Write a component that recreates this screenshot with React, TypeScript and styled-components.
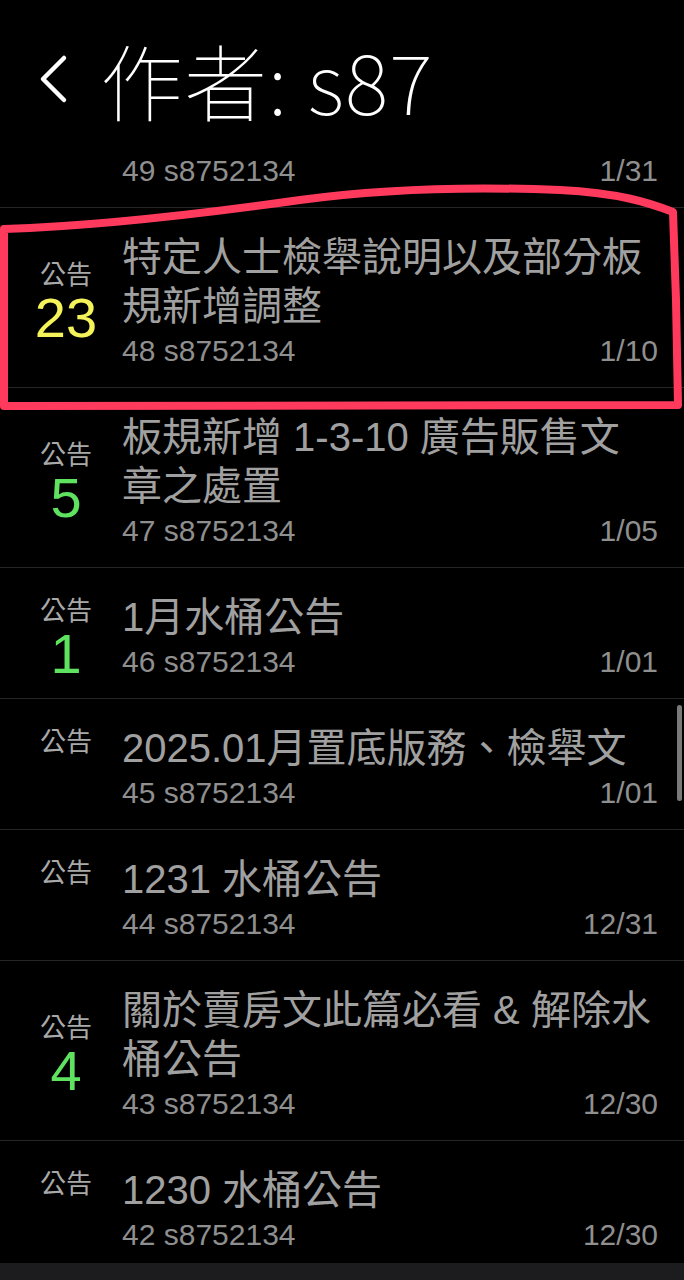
import React from "react";
import styled, { createGlobalStyle } from "styled-components";

const Global = createGlobalStyle`
  html, body { margin: 0; padding: 0; background: #000; }
  body { font-family: "Liberation Sans", "Noto Sans CJK TC", sans-serif; }
  * { box-sizing: border-box; }
`;

const Page = styled.div`
  position: relative;
  width: 684px;
  height: 1280px;
  background: #000;
  display: flex;
  flex-direction: column;
  overflow: hidden;
`;

const Header = styled.header`
  height: 150px;
  flex: none;
  display: flex;
  align-items: center;
  padding: 8px 0 0 38px;
  gap: 30px;
  background: #000;
`;

const BackButton = styled.button`
  background: none;
  border: none;
  padding: 0;
  width: 32px;
  height: 50px;
  display: flex;
  align-items: center;
  justify-content: center;
`;

const Title = styled.h1`
  margin: 0;
  color: #fff;
  font-family: "Noto Sans CJK TC", sans-serif;
  font-weight: 100;
  font-size: 83px;
  line-height: 1;
  letter-spacing: 1px;
`;

const Viewport = styled.div`
  flex: 1;
  overflow: hidden;
`;

const Row = styled.div<{ $clipped?: boolean }>`
  display: flex;
  border-bottom: 1px solid #262626;
  padding: ${(p) => (p.$clipped ? "1px" : "25px")} 26px 16px 0;
`;

const Left = styled.div`
  flex: none;
  width: 112px;
  margin: 0 0 6px 10px;
  display: flex;
  flex-direction: column;
  align-items: center;
  justify-content: center;
`;

const Label = styled.div`
  font-family: "Noto Sans CJK TC", sans-serif;
  font-size: 26px;
  line-height: 30px;
  color: #a9a9a9;
`;

const Num = styled.div<{ $color: string }>`
  height: 52px;
  font-family: "Liberation Sans", sans-serif;
  font-size: 56px;
  line-height: 60px;
  color: ${(p) => p.$color};
`;

const Body = styled.div<{ $clipped?: boolean }>`
  flex: 1;
  min-width: 0;
  display: flex;
  flex-direction: column;
  margin-left: ${(p) => (p.$clipped ? "122px" : "0")};
`;

const PostTitle = styled.div`
  font-family: "Liberation Sans", "Noto Sans CJK TC", sans-serif;
  font-size: 40px;
  line-height: 49px;
  color: #a0a0a0;
`;

const Meta = styled.div`
  display: flex;
  justify-content: space-between;
  font-family: "Liberation Sans", sans-serif;
  font-size: 30px;
  line-height: 40px;
  color: #8f8f8f;
  white-space: pre;
`;

const Footer = styled.div`
  height: 17px;
  flex: none;
  background: #1c1c1e;
`;

const ScrollThumb = styled.div`
  position: absolute;
  right: 2px;
  top: 705px;
  width: 5px;
  height: 96px;
  border-radius: 3px;
  background: #7a7a7a;
`;

const Annotation = styled.svg`
  position: absolute;
  left: 0;
  top: 0;
  pointer-events: none;
`;

type Post = {
  num?: string;
  color?: string;
  title: string;
  id: string;
  date: string;
};

const YELLOW = "#f4f35a";
const GREEN = "#5fe25f";

const posts: Post[] = [
  { num: "23", color: YELLOW, title: "特定人士檢舉說明以及部分板規新增調整", id: "48", date: "1/10" },
  { num: "5", color: GREEN, title: "板規新增 1-3-10 廣告販售文章之處置", id: "47", date: "1/05" },
  { num: "1", color: GREEN, title: "1月水桶公告", id: "46", date: "1/01" },
  { title: "2025.01月置底版務、檢舉文", id: "45", date: "1/01" },
  { title: "1231 水桶公告", id: "44", date: "12/31" },
  { num: "4", color: GREEN, title: "關於賣房文此篇必看 & 解除水桶公告", id: "43", date: "12/30" },
  { title: "1230 水桶公告", id: "42", date: "12/30" },
];

export default function App() {
  return (
    <Page>
      <Global />
      <Header>
        <BackButton aria-label="返回">
          <svg width="32" height="50" viewBox="0 0 32 50">
            <polyline
              points="26,4 5,25 26,46"
              fill="none"
              stroke="#fff"
              strokeWidth="4.5"
              strokeLinecap="round"
              strokeLinejoin="round"
            />
          </svg>
        </BackButton>
        <Title>作者: s87</Title>
      </Header>
      <Viewport>
        <Row $clipped>
          <Body $clipped>
            <Meta>
              <span>49 s8752134</span>
              <span>1/31</span>
            </Meta>
          </Body>
        </Row>
        {posts.map((p) => (
          <Row key={p.id}>
            <Left>
              <Label>公告</Label>
              <Num $color={p.color ?? "transparent"}>{p.num ?? ""}</Num>
            </Left>
            <Body>
              <PostTitle>{p.title}</PostTitle>
              <Meta>
                <span>{p.id} s8752134</span>
                <span>{p.date}</span>
              </Meta>
            </Body>
          </Row>
        ))}
      </Viewport>
      <Footer />
      <ScrollThumb />
      <Annotation width="684" height="1280" viewBox="0 0 684 1280">
        <path
          d="M4,406 L4,229 C 100,226 200,214 300,200 C 380,189 460,186 560,190 C 620,193 650,203 673,212 L 676,300 L 678,405 Z"
          fill="none"
          stroke="#ff3a5c"
          strokeWidth="8"
          strokeLinejoin="round"
          strokeLinecap="round"
        />
      </Annotation>
    </Page>
  );
}
